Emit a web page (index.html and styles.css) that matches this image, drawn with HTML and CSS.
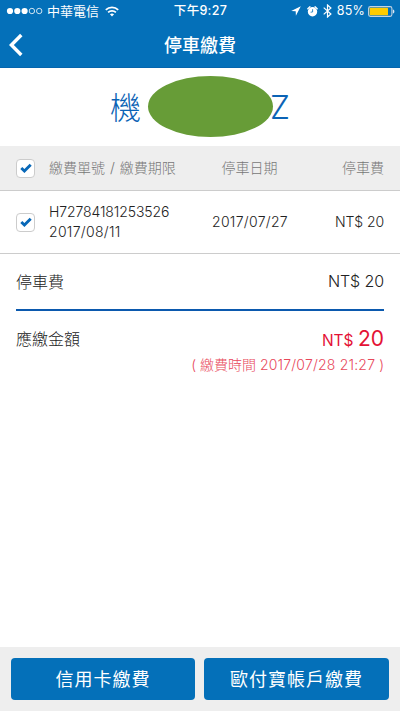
FILE: index.html
```html
<!DOCTYPE html>
<html lang="zh-Hant">
<head>
<meta charset="utf-8">
<meta name="viewport" content="width=device-width, initial-scale=1">
<title>停車繳費</title>
<link rel="stylesheet" href="styles.css">
</head>
<body>
<div class="app">
  <header class="top">
    <div class="status">
      <div class="status-left">
        <svg class="signal" width="38" height="8" viewBox="0 0 38 8"><g fill="#fff"><circle cx="4" cy="4" r="3.1"/><circle cx="11.3" cy="4" r="3.1"/><circle cx="18.6" cy="4" r="3.1"/></g><g fill="none" stroke="#fff" stroke-width=".8"><circle cx="25.9" cy="4" r="2.7"/><circle cx="33.2" cy="4" r="2.7"/></g></svg>
        <span class="carrier">中華電信</span>
        <svg class="wifi" width="14" height="11" viewBox="0 0 14 11"><g fill="none" stroke="#fff" stroke-width="1.7"><path d="M.8 3.9a8.8 8.8 0 0 1 12.4 0"/><path d="M3.1 6.4a5.6 5.6 0 0 1 7.8 0"/></g><path d="M4.9 8.3a3.2 3.2 0 0 1 4.2 0L7 10.6z" fill="#fff"/></svg>
      </div>
      <span class="clock">下午9:27</span>
      <div class="status-right">
        <svg width="10" height="10" viewBox="0 0 10 10"><path d="M9.8.2.2 5l4.5.3.2 4.5z" fill="#fff"/></svg>
        <svg width="11" height="11" viewBox="0 0 11 11"><circle cx="5.5" cy="5.8" r="4.7" fill="#fff"/><path d="M.8 2.8 2.9.8M10.2 2.8 8.1.8" stroke="#fff" stroke-width="1.3" stroke-linecap="round"/><path d="M5.6 3.2V6L3.6 6.2" stroke="#0470b9" fill="none" stroke-width=".8"/></svg>
        <svg class="bt" width="9" height="14" viewBox="0 0 9 14"><path d="M.7 3.6 7.9 10 4.5 13V1l3.4 3L.7 10.4" fill="none" stroke="#fff" stroke-width="1.2"/></svg>
        <span class="percent">85%</span>
        <svg class="battery" width="27" height="11" viewBox="0 0 27 11"><rect x=".6" y=".6" width="23.3" height="9.8" rx="1.8" fill="none" stroke="#c5d3e2" stroke-width="1.1"/><rect x="1.7" y="1.7" width="18.3" height="7.6" rx=".6" fill="#fc0"/><path d="M24.9 3.5c2 .5 2 3.5 0 4z" fill="#dce8f3"/></svg>
      </div>
    </div>
    <div class="nav">
      <svg class="back" width="14" height="24" viewBox="0 0 14 24"><path d="M12.3 2 2.4 12l9.9 10" fill="none" stroke="#fff" stroke-width="3.4"/></svg>
      <h1>停車繳費</h1>
    </div>
  </header>
  <section class="plate">
    <span class="plate-first">機</span>
    <span class="mask"></span>
    <span class="plate-last">Z</span>
  </section>
  <section class="bills">
    <div class="row head">
      <span class="check"><svg width="12" height="10" viewBox="0 0 12 10"><path d="m1.3 5 3.1 3L10.7 1.8" fill="none" stroke="#0868b8" stroke-width="2.9"/></svg></span>
      <span class="number">繳費單號 / 繳費期限</span>
      <span class="date">停車日期</span>
      <span class="fee">停車費</span>
    </div>
    <div class="row item">
      <span class="check"><svg width="12" height="10" viewBox="0 0 12 10"><path d="m1.3 5 3.1 3L10.7 1.8" fill="none" stroke="#0868b8" stroke-width="2.9"/></svg></span>
      <span class="number"><span class="bill-id">H72784181253526</span><br><span class="due">2017/08/11</span></span>
      <span class="date">2017/07/27</span>
      <span class="fee">NT$ 20</span>
    </div>
  </section>
  <section class="summary">
    <div class="subtotal"><span>停車費</span><span class="subtotal-fee">NT$ 20</span></div>
    <div class="total"><span>應繳金額</span><span class="amount">NT$ <b>20</b></span></div>
    <p class="time">( 繳費時間 <span class="stamp">2017/07/28 21:27</span> )</p>
  </section>
  <footer class="actions">
    <button>信用卡繳費</button>
    <button>歐付寶帳戶繳費</button>
  </footer>
</div>
</body>
</html>
```
FILE: styles.css
```css
* { box-sizing: border-box; }
body {
  margin: 0;
  background: #fff;
  color: #222;
  font-family: Inter, "Noto Sans CJK TC", sans-serif;
  font-weight: 300;
}
svg { display: block; flex: none; }
.app { display: flex; flex-direction: column; width: 400px; height: 711px; overflow: hidden; }
.top { height: 68px; background: #0470b9; color: #fff; border-bottom: 1px solid #0565ae; flex: none; }
.status { display: grid; grid-template-columns: 1fr auto 1fr; align-items: center; height: 22px; padding: 0 5px 0 6px; font-size: 12px; line-height: 22px; font-weight: 400; }
.status-left, .status-right { display: flex; align-items: center; }
.carrier { margin-left: 3px; font-size: 13px; }
.wifi { margin-left: 6px; }
.clock { font-size: 12.5px; font-weight: 500; letter-spacing: .3px; }
.status-right { justify-content: flex-end; }
.status-right svg + svg { margin-left: 6px; }
.status-right .bt { margin-left: 5px; }
.percent { margin: 0 3px 0 5px; font-size: 12.5px; letter-spacing: .2px; }
.nav { display: grid; grid-template-columns: 60px 1fr 60px; align-items: center; height: 46px; }
.back { margin-left: 9px; }
h1 { margin: 0; padding-top: 2px; text-align: center; font-size: 18px; font-weight: 500; line-height: 24px; }
.plate { display: flex; align-items: center; height: 78px; padding: 0 0 1px 110px; color: #0b63b5; font-size: 31px; line-height: 40px; flex: none; }
.plate-first, .plate-last { padding-top: 2px; }
.mask { width: 125px; height: 61px; margin-left: 7px; border-radius: 50%; background: #679c37; position: relative; }
.plate-last { margin-left: -3px; font-size: 32px; }
.row { display: grid; grid-template-columns: 19px 172px 85px 1fr; align-items: center; padding: 0 16px; border-bottom: 1px solid #ccc; font-size: 14px; line-height: 20px; }
.head { height: 45px; background: #eee; color: #777; }
.item { height: 63px; }
.check { display: grid; place-items: center; width: 19px; height: 19px; border: 1px solid #ccc; border-radius: 4px; background: #fff; }
.number { padding-left: 14px; white-space: nowrap; }
.bill-id { letter-spacing: -.1px; }
.due { letter-spacing: .3px; }
.date { text-align: center; white-space: nowrap; }
.item .date { padding-left: 1px; letter-spacing: .3px; }
.fee { text-align: right; }
.head .number { word-spacing: 1px; }
.item .fee, .subtotal-fee { letter-spacing: -.1px; }
.summary { flex: 1; padding: 0 16px; }
.subtotal { display: flex; justify-content: space-between; align-items: center; height: 57px; padding-bottom: 1px; border-bottom: 2px solid #0b59ae; font-size: 16px; }
.total { display: flex; justify-content: space-between; align-items: center; height: 54px; font-size: 16px; }
.amount { color: #e41235; font-size: 15.5px; font-weight: 400; }
.amount b { font-size: 21px; font-weight: 400; }
.time { margin: -9px 0 0; color: #e8485a; font-size: 14px; line-height: 18px; text-align: right; white-space: nowrap; }
.stamp { letter-spacing: .2px; }
.actions { display: grid; grid-template-columns: 184px 185px; column-gap: 9px; height: 64px; padding: 11px; background: #eee; flex: none; }
button { height: 42px; padding: 0; border: 0; border-radius: 4px; background: #0470b9; color: #fff; font: 400 18px/44px Inter, "Noto Sans CJK TC", sans-serif; letter-spacing: 1px; }
```
